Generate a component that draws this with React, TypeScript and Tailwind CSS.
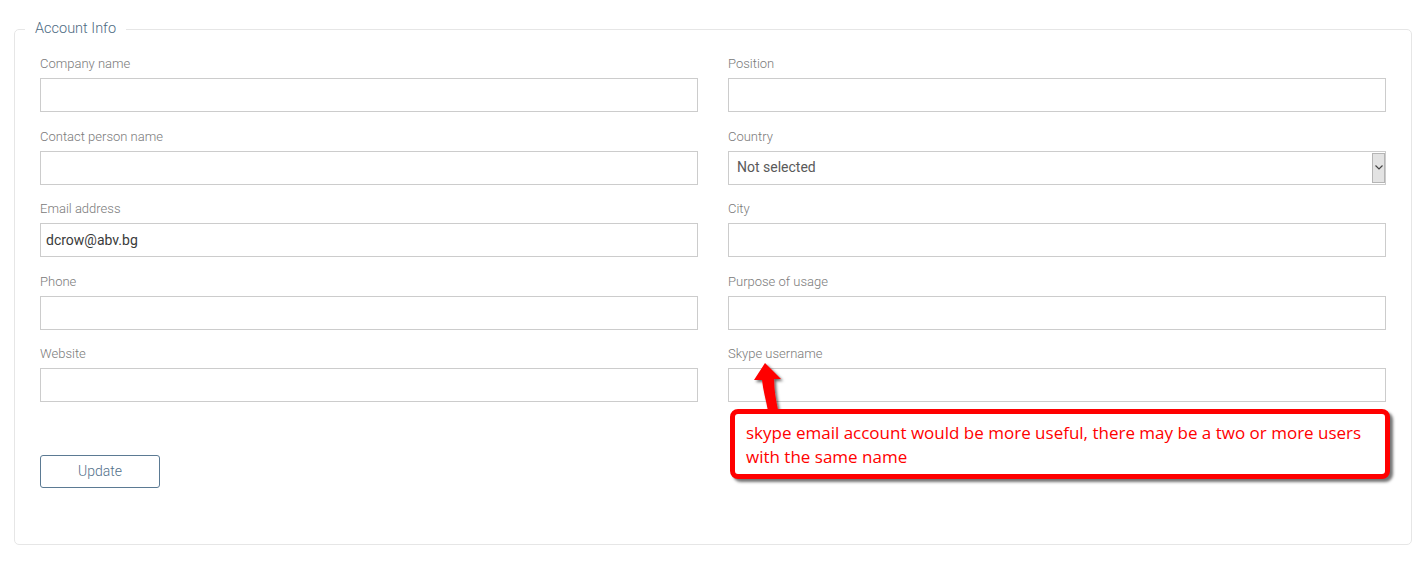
import React from "react";

const labelCls = "block text-[13px] leading-[17px] font-light text-[#7a7a7a] mb-[6px]";
const inputCls = "block w-full h-[34px] border border-[#cccccc] bg-white px-[5px] text-[14px] text-[#3a3a3a] outline-none";

function Field({ label, value }: { label: string; value?: string }) {
  return (
    <div className="mb-[15.5px]">
      <label className={labelCls}>{label}</label>
      <input className={inputCls} defaultValue={value} readOnly />
    </div>
  );
}

function SelectField() {
  return (
    <div className="mb-[15.5px]">
      <label className={labelCls}>Country</label>
      <div className="flex h-[34px] w-full border border-[#cccccc] bg-white">
        <div className="flex flex-1 items-center pl-[8px] text-[14px] text-[#5a5a5a]">Not selected</div>
        <div className="my-[1px] flex w-[13px] items-center justify-center border border-[#b5b5b5] bg-[#e3e3e3]">
          <svg width="8" height="5" viewBox="0 0 8 5">
            <path d="M0.5 0.5 L4 4 L7.5 0.5" fill="none" stroke="#444" strokeWidth="1.2" />
          </svg>
        </div>
      </div>
    </div>
  );
}

export default function App() {
  return (
    <div className="relative h-[571px] w-[1425px] bg-white" style={{ fontFamily: "Roboto, 'Liberation Sans', sans-serif" }}>
      <div className="pl-[14px] pr-[13px] pt-[20px]">
        <fieldset className="h-[525px] rounded-[5px] border border-[#e6e6e6] px-[25px] pt-[17px]">
          <legend className="ml-[-15px] px-[10px] text-[14.5px] font-light text-[#4d6a82]" style={{ lineHeight: "18px" }}>
            Account Info
          </legend>
          <div className="grid grid-cols-2 gap-x-[30px]">
            <div>
              <Field label="Company name" />
              <Field label="Contact person name" />
              <Field label="Email address" value="dcrow@abv.bg" />
              <Field label="Phone" />
              <Field label="Website" />
            </div>
            <div>
              <Field label="Position" />
              <SelectField />
              <Field label="City" />
              <Field label="Purpose of usage" />
              <Field label="Skype username" />
            </div>
          </div>
          <button className="mt-[37px] h-[33px] w-[120px] rounded-[3px] border border-[#5b7a93] bg-white text-[14px] font-light text-[#52708a]">
            Update
          </button>
        </fieldset>
      </div>

      {/* annotation arrow */}
      <svg className="absolute left-[745px] top-[358px]" width="50" height="60" viewBox="0 0 50 60">
        <defs>
          <filter id="sh" x="-50%" y="-50%" width="200%" height="200%">
            <feDropShadow dx="2" dy="2" stdDeviation="1.5" floodColor="#000" floodOpacity="0.6" />
          </filter>
        </defs>
        <path
          d="M20 5 L9 22 L17 22 C18 32 21 42 23 53 L33 52 C31 42 29 32 29 21 L36 21 Z"
          fill="#ff0000"
          filter="url(#sh)"
        />
      </svg>

      {/* annotation box */}
      <div
        className="absolute left-[730px] top-[409px] h-[70px] w-[660px] rounded-[8px] border-[5px] border-[#ff0000] bg-white px-[11px] pt-[7px] text-[17px] leading-[24px] text-[#ff0000]"
        style={{ fontFamily: "'Open Sans', 'Noto Sans', sans-serif", boxShadow: "3px 3px 3px rgba(0,0,0,0.55)" }}
      >
        skype email account would be more useful, there may be a two or more users
        <br />
        with the same name
      </div>
    </div>
  );
}
